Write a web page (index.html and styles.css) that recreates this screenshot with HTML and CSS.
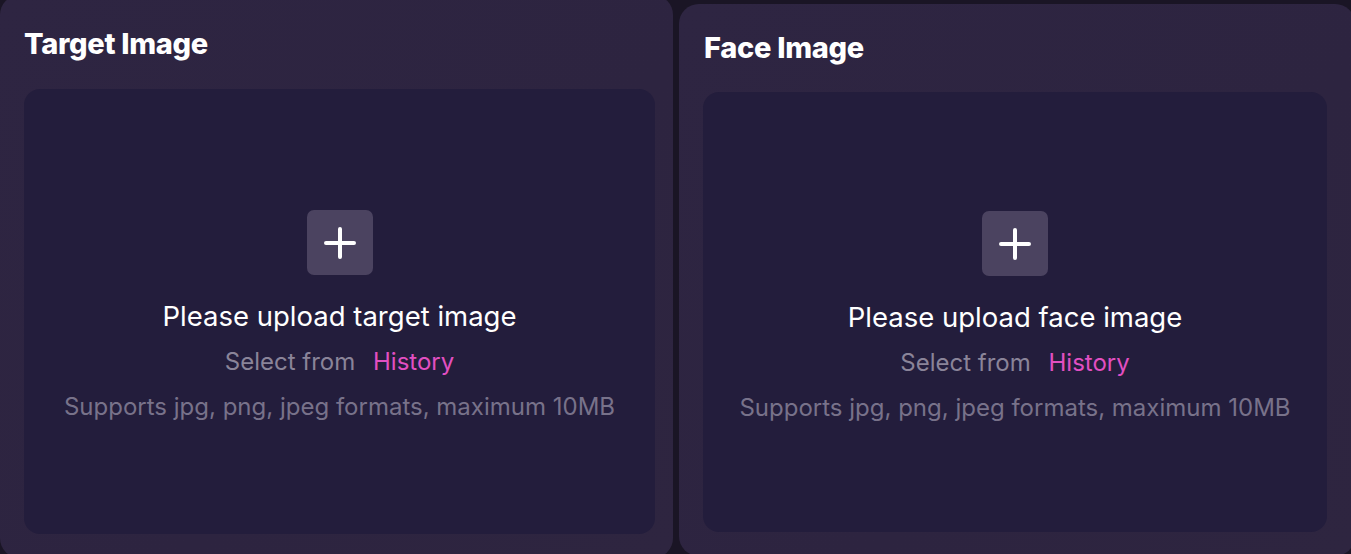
FILE: index.html
```html
<!DOCTYPE html>
<html lang="en">
<head>
<meta charset="utf-8">
<title>Upload</title>
<link rel="stylesheet" href="styles.css">
</head>
<body>
<div class="page">
  <section class="card card-target">
    <h2 class="card-title">Target Image</h2>
    <div class="dropzone">
      <div class="add-btn">
        <svg width="34" height="34" viewBox="0 0 34 34" aria-hidden="true">
          <path d="M17 3v28M3 17h28" stroke="#fff" stroke-width="4" stroke-linecap="round" fill="none"/>
        </svg>
      </div>
      <p class="prompt">Please upload target image</p>
      <p class="select">Select from <span class="history">History</span></p>
      <p class="hint">Supports jpg, png, jpeg formats, maximum 10MB</p>
    </div>
  </section>
  <section class="card card-face">
    <h2 class="card-title">Face Image</h2>
    <div class="dropzone">
      <div class="add-btn">
        <svg width="34" height="34" viewBox="0 0 34 34" aria-hidden="true">
          <path d="M17 3v28M3 17h28" stroke="#fff" stroke-width="4" stroke-linecap="round" fill="none"/>
        </svg>
      </div>
      <p class="prompt">Please upload face image</p>
      <p class="select">Select from <span class="history">History</span></p>
      <p class="hint">Supports jpg, png, jpeg formats, maximum 10MB</p>
    </div>
  </section>
</div>
</body>
</html>
```
FILE: styles.css
```css
html, body {
  margin: 0;
  padding: 0;
  background: #1a1525;
  overflow: hidden;
}
body {
  font-family: Inter, "Noto Sans", sans-serif;
  width: 1351px;
  height: 554px;
}
.page {
  display: flex;
  gap: 6px;
  align-items: flex-start;
}
.card {
  box-sizing: border-box;
  flex-shrink: 0;
  background: linear-gradient(135deg, #2e2542 0%, #2d2440 60%, #2e2540 100%);
  border-radius: 20px;
  padding: 0 24px 24px 24px;
  display: flex;
  flex-direction: column;
}
.card-target {
  width: 673px;
  height: 563px;
  margin-top: -5px;
  padding-right: 18px;
}
.card-face {
  width: 676px;
  height: 552px;
  margin-top: 4px;
  padding-left: 24px;
  padding-right: 28px;
}
.card-title {
  margin: 0;
  color: #ffffff;
  font-size: 29px;
  font-weight: 800;
  line-height: 30px;
  letter-spacing: -0.3px;
}
.card-target .card-title {
  padding-top: 34px;
  padding-bottom: 30px;
}
.card-face .card-title {
  padding-top: 29px;
  padding-bottom: 29px;
  padding-left: 1px;
}
.dropzone {
  flex: 1;
  background: #231d3c;
  border-radius: 16px;
  display: flex;
  flex-direction: column;
  align-items: center;
  justify-content: center;
  padding-top: 9px;
}
.card-face .dropzone {
  padding-top: 10px;
}
.add-btn {
  width: 66px;
  height: 65px;
  border-radius: 7px;
  background: #4b4360;
  display: flex;
  align-items: center;
  justify-content: center;
}
.prompt {
  margin: 25px 0 0 0;
  color: #ffffff;
  font-size: 27.5px;
  line-height: 32px;
}
.select {
  margin: 15px 0 0 0;
  color: #8a8499;
  font-size: 24px;
  line-height: 30px;
}
.history {
  color: #e24fc2;
  margin-left: 11px;
}
.hint {
  margin: 15px 0 0 0;
  color: #78728a;
  font-size: 24px;
  line-height: 30px;
}
```
